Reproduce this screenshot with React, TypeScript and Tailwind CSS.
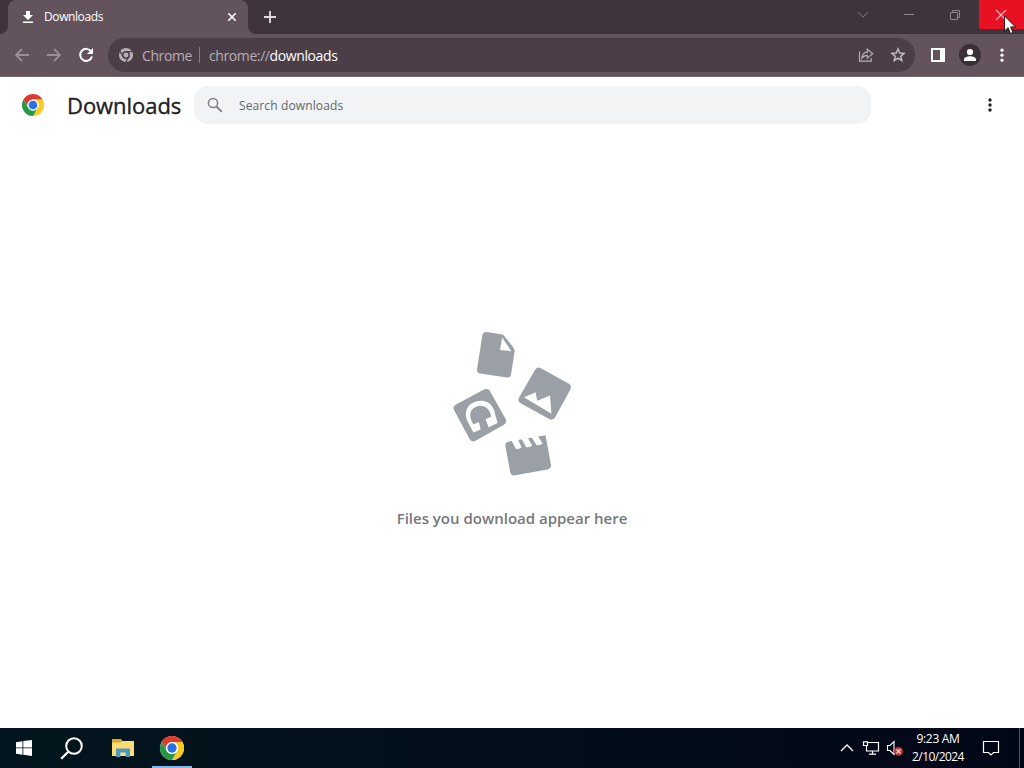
import React from 'react';

function ChromeLogo({ className }: { className: string }) {
  return (
    <svg viewBox="0 0 48 48" className={className}>
      <circle cx="24" cy="24" r="24" fill="#fff" />
      <path d="M3.2 12A24 24 0 0 1 44.8 12H24A12 12 0 0 0 13.6 30Z" fill="#df3a2e" />
      <path d="M44.8 12A24 24 0 0 1 24 48L34.4 30A12 12 0 0 0 24 12Z" fill="#fbc926" />
      <path d="M24 48A24 24 0 0 1 3.2 12L13.6 30A12 12 0 0 0 34.4 30Z" fill="#269947" />
      <circle cx="24" cy="24" r="12" fill="#fff" />
      <circle cx="24" cy="24" r="9.4" fill="#2a70e8" />
    </svg>
  );
}

function TitleBar() {
  return (
    <div className="flex h-[34px] bg-[#3f333c]">
      <div className="flex h-[34px] w-[256px]">
        <svg className="h-[34px] w-2 shrink-0" viewBox="0 0 8 34">
          <path d="M8 26V34H0A8 8 0 0 0 8 26Z" fill="#62535d" />
        </svg>
        <div className="flex w-[240px] items-center rounded-t-[8px] bg-[#62535d] pl-[14px] pr-[10px]">
          <svg viewBox="0 0 12 13" className="h-[13px] w-3">
            <path d="M4 0h4v4h3L6 9 1 4h3zM1 10.5h10V12H1z" fill="#fff" />
          </svg>
          <span className="ml-[10px] text-[12px] leading-4 tracking-[-0.4px] text-white">Downloads</span>
          <svg viewBox="0 0 12 12" className="ml-auto h-3 w-3">
            <path d="M2.3 2.3l7.4 7.4M9.7 2.3L2.3 9.7" stroke="#fff" strokeWidth="1.6" />
          </svg>
        </div>
        <svg className="h-[34px] w-2 shrink-0" viewBox="0 0 8 34">
          <path d="M0 26V34H8A8 8 0 0 1 0 26Z" fill="#62535d" />
        </svg>
      </div>
      <svg viewBox="0 0 14 14" className="ml-[7px] mt-[10px] h-[14px] w-[14px]">
        <path d="M7 1v12M1 7h12" stroke="#e2dce0" strokeWidth="1.8" />
      </svg>
      <div className="ml-auto flex h-[29px]">
        <div className="flex w-[46px] items-center justify-center pr-[2px]">
          <svg viewBox="0 0 12 8" className="h-2 w-3">
            <path d="M1 1.2l5 5 5-5" fill="none" stroke="#8b8088" />
          </svg>
        </div>
        <div className="flex w-[46px] items-center justify-center pr-[2px]">
          <div className="h-px w-[10px] bg-[#92878f]" />
        </div>
        <div className="flex w-[46px] items-center justify-center pr-[2px]">
          <svg viewBox="0 0 12 12" className="h-3 w-3">
            <path d="M1.5 3.5h7v7h-7zM3.5 3.5v-2h7v7h-2" fill="none" stroke="#92878f" />
          </svg>
        </div>
        <div className="relative flex w-[45px] items-center justify-center bg-[#e81123] pr-[2px]">
          <svg viewBox="0 0 12 12" className="h-3 w-3">
            <path d="M1 1l10 10M11 1L1 11" stroke="#f5b8bd" strokeWidth="1.1" />
          </svg>
          <svg viewBox="0 0 12 20" className="absolute left-[25px] top-[15px] z-10 h-5 w-3">
            <path d="M.6 1v15l3.5-3.3 2.4 5.8 2.5-1-2.4-5.6h4.8Z" fill="#fff" stroke="#111" strokeWidth=".9" />
          </svg>
        </div>
      </div>
    </div>
  );
}

function Toolbar() {
  return (
    <div className="flex h-[43px] items-center border-b border-[#75676f] bg-[#62535d]">
      <svg viewBox="0 0 16 16" className="ml-[14px] h-4 w-4">
        <path d="M15 8H2M8 2L2 8l6 6" fill="none" stroke="#9b8f97" strokeWidth="1.8" />
      </svg>
      <svg viewBox="0 0 16 16" className="ml-4 h-4 w-4">
        <path d="M1 8h13M8 2l6 6-6 6" fill="none" stroke="#9b8f97" strokeWidth="1.8" />
      </svg>
      <svg viewBox="0 0 16 16" className="ml-4 h-4 w-4">
        <path d="M13.2 4.5A6 6 0 1 0 14 9.5" fill="none" stroke="#fff" strokeWidth="2" />
        <path d="M15 1v6H9z" fill="#fff" />
      </svg>
      <div className="ml-[14px] flex h-[34px] w-[807px] items-center rounded-full bg-[#4b3e47] pl-[11px] pr-2 text-[14px] leading-5">
        <svg viewBox="0 0 14 14" className="h-[14px] w-[14px]">
          <circle cx="7" cy="7" r="7" fill="#bab1b7" />
          <circle cx="7" cy="7" r="3.2" fill="none" stroke="#4b3e47" strokeWidth="1.5" />
          <path d="M7 3.7h6.4M4.1 8.7L1 3.2M9.9 8.7L6.7 14" stroke="#4b3e47" strokeWidth="1.2" />
        </svg>
        <span className="ml-[9px] w-[49px] whitespace-nowrap pt-px tracking-[-0.4px] text-[#b8aeb5]">Chrome</span>
        <span className="ml-2 h-4 w-px bg-[#897e86]" />
        <span className="ml-[9px] whitespace-nowrap pt-px tracking-[-0.4px] text-[#b8aeb5]">
          chrome://<span className="text-white">downloads</span>
        </span>
        <svg viewBox="0 0 16 16" className="ml-auto h-4 w-4">
          <path
            d="M1.5 4.5v9.7h11.7v-3M3.8 11.2C4 7.2 6.2 5.4 9.3 5.1V2.2l5.4 4.5-5.4 4.4V8.3C7 8.3 5.2 9.1 3.8 11.2Z"
            fill="none"
            stroke="#b8aeb5"
            strokeWidth="1.2"
          />
        </svg>
        <svg viewBox="0 0 24 24" className="ml-[15px] h-[18px] w-[18px]">
          <path
            d="M22 9.24l-7.19-.62L12 2 9.19 8.63 2 9.24l5.46 4.73L5.82 21 12 17.27 18.18 21l-1.63-7.03L22 9.24zM12 15.4l-3.76 2.27 1-4.28-3.32-2.88 4.38-.38L12 6.1l1.71 4.04 4.38.38-3.32 2.88 1 4.28L12 15.4z"
            fill="#c9c0c6"
            stroke="#c9c0c6"
            strokeWidth=".4"
          />
        </svg>
      </div>
      <svg viewBox="0 0 14 14" className="ml-4 h-[14px] w-[14px]">
        <path d="M0 0h14v14H0zM2 2v10h7V2z" fill="#fff" fillRule="evenodd" />
      </svg>
      <svg viewBox="0 0 22 22" className="ml-[14px] h-[22px] w-[22px]">
        <circle cx="11" cy="11" r="11" fill="#3b3037" />
        <circle cx="11" cy="8" r="3.1" fill="#fff" />
        <path d="M5 17v-1.6c0-2.1 3.5-3.2 6-3.2s6 1.1 6 3.2V17z" fill="#fff" />
      </svg>
      <svg viewBox="0 0 4 14" className="ml-[19px] h-[14px] w-1">
        <circle cx="2" cy="2.2" r="1.6" fill="#fff" />
        <circle cx="2" cy="7.2" r="1.6" fill="#fff" />
        <circle cx="2" cy="12.2" r="1.6" fill="#fff" />
      </svg>
    </div>
  );
}

function PageHeader() {
  return (
    <header className="flex h-[56px] items-center">
      <ChromeLogo className="ml-[22px] h-[22px] w-[22px]" />
      <h1 className="ml-[23px] w-[127px] whitespace-nowrap text-[22px] font-medium leading-8 tracking-[-0.05px] text-[#202124] [-webkit-text-stroke:0.35px_#202124]">
        Downloads
      </h1>
      <div className="flex h-[38px] w-[677px] items-center rounded-[14px] bg-[#f1f3f4] pl-[13px]">
        <svg viewBox="0 0 16 16" className="h-4 w-4">
          <circle cx="6" cy="6" r="4.6" fill="none" stroke="#7d8084" strokeWidth="1.5" />
          <path d="M9.5 9.5l5.3 5.3" stroke="#7d8084" strokeWidth="1.9" />
        </svg>
        <span className="ml-4 pt-0.5 text-[12px] leading-4 tracking-[0.12px] text-[#62666a]">Search downloads</span>
      </div>
      <svg viewBox="0 0 4 14" className="ml-auto mr-8 h-[14px] w-1">
        <circle cx="2" cy="2" r="1.7" fill="#202124" />
        <circle cx="2" cy="7" r="1.7" fill="#202124" />
        <circle cx="2" cy="12" r="1.7" fill="#202124" />
      </svg>
    </header>
  );
}

function EmptyState() {
  return (
    <main className="flex flex-1 flex-col items-center pt-[195px]">
      <svg viewBox="450 328 124 150" className="h-[150px] w-[124px]">
        <g fill="#9aa0a6">
          <path d="M486.5 332L501 334.3Q503.5 334.7 505 336.8L513 347Q515 349.4 514.5 352L511 374.5Q510.4 378 507 377.5L480 373.6Q476.5 373 477 369.5L482.3 335.5Q483 331.5 486.5 332Z" />
          <path d="M541 368.3L568.5 383.6Q572.3 386 570.2 389.7L555.3 417Q553 421 549.2 419L521 403.5Q517 401 519.2 397.2L534.8 370.2Q537 366.2 541 368.3Z" />
          <path d="M456 404.4L484 389.6Q488 387.6 490.2 391.4L505.5 418.8Q507.5 422.7 503.6 425L475.5 440.7Q471.6 442.7 469.4 438.8L454.3 410.6Q452 406.7 456 404.4Z" />
          <path d="M509 441.5L545.5 435.3L551 464.5Q551.5 468.5 547.5 469.4L515 475.3Q511 476 510.2 472L505.4 446Q505 442.3 509 441.5Z" />
        </g>
        <g fill="#fff">
          <path d="M502.2 337.5L500 350L511.3 351.2Z" />
          <path d="M524 397.2L535.6 392.3L537.2 400.8L550 395.5L551.4 413.8Z" />
          <path d="M473.5 432.6L467.3 421C463.5 412 467.5 404.5 474.5 402C484 398.5 491 402.5 494 410L497.6 423L488.6 427.2L485.6 419.3L491.3 416.7C489.5 408.5 484.5 404.3 477.5 406.3C470.5 408.5 468.8 413.8 471.5 421L473.5 424.5L478.8 422L480.7 429.5Z" />
          <path d="M511.5 440.5L518 439.5L521.5 447.2Q519.5 449.7 515.7 448.7Z" />
          <path d="M521.7 439L528 438L532.1 445.5Q530 447.9 526 447Z" />
          <path d="M531.4 437L537.8 436L542.7 443.5Q540 446.1 536.5 445Z" />
        </g>
      </svg>
      <p className="mt-[28px] whitespace-nowrap text-[15px] font-semibold leading-6 text-[#76787b]">Files you download appear here</p>
    </main>
  );
}

function Taskbar() {
  return (
    <footer className="flex h-10 bg-gradient-to-r from-[#03161e] to-[#020717]">
      <div className="flex w-12 items-center justify-center">
        <svg viewBox="0 0 16 16" className="h-4 w-4">
          <path d="M0 2.2L6.5 1.2V7.5H0zM7.3 1.1L16 0V7.5H7.3zM0 8.3h6.5v6.5L0 13.8zM7.3 8.3H16V16l-8.7-1.2z" fill="#fff" />
        </svg>
      </div>
      <div className="flex w-12 items-center justify-center">
        <svg viewBox="0 0 24 24" className="h-6 w-6">
          <circle cx="14" cy="10" r="7.8" fill="none" stroke="#fff" strokeWidth="2" />
          <path d="M8.3 15.8L1.2 22.7" stroke="#fff" strokeWidth="2.3" />
        </svg>
      </div>
      <div className="flex w-[54px] items-center justify-center">
        <svg viewBox="0 0 22 18" className="h-[18px] w-[22px]">
          <path d="M0 0h9l1.5 2H22v15H0z" fill="#dba630" />
          <path d="M0 3.5h8.5l2-1.5H22v15H0z" fill="#fbdc75" />
          <path d="M4 9.5h14V18h-4.3v-4.5H8.3V18H4z" fill="#4b99bd" />
        </svg>
      </div>
      <div className="flex w-[44px] justify-center">
        <div className="flex h-10 w-10 items-center justify-center border-b-2 border-[#7db9e8] pt-0.5">
          <ChromeLogo className="h-6 w-6" />
        </div>
      </div>
      <div className="ml-auto flex items-center">
        <svg viewBox="0 0 14 10" className="h-[10px] w-[14px]">
          <path d="M1 8l6-6 6 6" fill="none" stroke="#fff" strokeWidth="1.4" />
        </svg>
        <svg viewBox="0 0 18 16" className="ml-[8px] h-4 w-[18px]">
          <path d="M6 2.5h10.5v8.5H4.5V6M10.5 11v3M7 14.2h7M1.5 1.8h4v3.7h-4zM4.5 5.5V11" fill="none" stroke="#fff" strokeWidth="1.2" />
        </svg>
        <svg viewBox="0 0 18 18" className="ml-[6px] h-[18px] w-[18px]">
          <path d="M1.5 6.5H4l4-4v13l-4-4H1.5z" fill="none" stroke="#fff" strokeWidth="1.1" />
          <circle cx="12.5" cy="12.3" r="4.4" fill="#c93338" />
          <path d="M10.5 10.3l4 4M14.5 10.3l-4 4" stroke="#fff" strokeWidth="1.2" />
        </svg>
        <div className="ml-[5px] w-[58px] whitespace-nowrap text-center text-[12px] leading-[18px] text-white">
          <div className="tracking-[-0.3px]">9:23 AM</div>
          <div className="-ml-1 -mr-1 tracking-[-0.55px]">2/10/2024</div>
        </div>
        <svg viewBox="0 0 18 18" className="ml-[15px] mr-[19px] h-[18px] w-[18px]">
          <path d="M1.5 2.5h15v11h-5L9 16l-2.5-2.5h-5z" fill="none" stroke="#fff" strokeWidth="1.2" />
        </svg>
        <div className="mr-[4px] h-10 w-px bg-[#4a5361]" />
      </div>
    </footer>
  );
}

export default function App() {
  return (
    <div className="flex h-[768px] w-[1024px] flex-col overflow-hidden bg-white font-['Open_Sans','Noto_Sans',sans-serif]">
      <TitleBar />
      <Toolbar />
      <PageHeader />
      <EmptyState />
      <Taskbar />
    </div>
  );
}
